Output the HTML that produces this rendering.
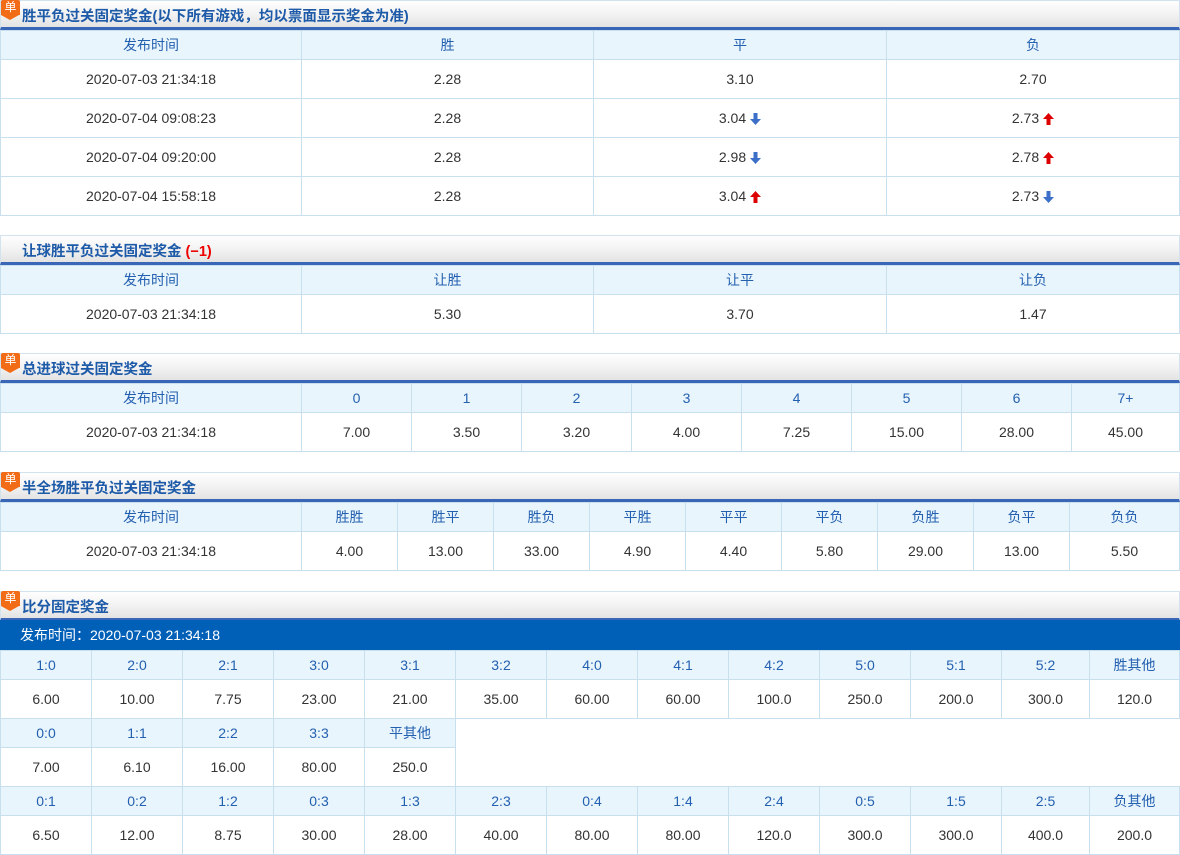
<!DOCTYPE html>
<html><head><meta charset="utf-8">
<style>
*{margin:0;padding:0;box-sizing:border-box}
body{width:1180px;height:854px;background:#fff;font-family:"Liberation Sans","Noto Sans CJK SC",sans-serif;position:relative;overflow:hidden}
.hd{position:absolute;left:0;width:1180px;height:30px;background:linear-gradient(#fefefe,#f3f3f3 50%,#e3e3e3);border:1px solid #d3e3ee;border-bottom:3px solid #3a66b8}
.hd .t{position:absolute;left:21px;top:4px;font-size:14.5px;color:#1d5aa8;font-weight:bold}
.dan{position:absolute;left:0;top:-1px;width:19px;height:20px}
.dan b{display:block;width:19px;height:15px;background:#f26b16;color:#fff;font-size:12px;font-weight:normal;line-height:15px;text-align:center;border-radius:2px 2px 0 0}
.dan i{display:block;width:0;height:0;border-left:9.5px solid transparent;border-right:9.5px solid transparent;border-top:5px solid #f26b16}
table{position:absolute;left:0;width:1180px;border-collapse:collapse;table-layout:fixed}
td{border:1px solid #c8dfee;text-align:center;font-size:14px;color:#333;height:39px;padding:0}
tr.h td{background:#e8f5fd;color:#2460b0;height:29px;font-size:14px}
.bar{position:absolute;left:0;top:620px;width:1180px;height:30px;background:#0060b8;color:#fff;font-size:14px;line-height:30px;padding-left:20px}
svg{vertical-align:-2px;margin-left:4px}
</style></head><body>

<div class="hd" style="top:0"><div class="dan"><b>单</b><i></i></div><span class="t">胜平负过关固定奖金(以下所有游戏，均以票面显示奖金为准)</span></div>
<table style="top:30px"><colgroup><col style="width:301px"><col style="width:292px"><col style="width:293px"><col></colgroup>
<tr class="h"><td>发布时间</td><td>胜</td><td>平</td><td>负</td></tr>
<tr><td>2020-07-03 21:34:18</td><td>2.28</td><td>3.10</td><td>2.70</td></tr>
<tr><td>2020-07-04 09:08:23</td><td>2.28</td><td>3.04<svg width="11" height="12"><path d="M3.5 0h4v6h3.5l-5.5 6-5.5-6h3.5z" fill="#3b6fc8"/></svg></td><td>2.73<svg width="11" height="12"><path d="M3.5 12h4v-6h3.5l-5.5-6-5.5 6h3.5z" fill="#d00"/></svg></td></tr>
<tr><td>2020-07-04 09:20:00</td><td>2.28</td><td>2.98<svg width="11" height="12"><path d="M3.5 0h4v6h3.5l-5.5 6-5.5-6h3.5z" fill="#3b6fc8"/></svg></td><td>2.78<svg width="11" height="12"><path d="M3.5 12h4v-6h3.5l-5.5-6-5.5 6h3.5z" fill="#d00"/></svg></td></tr>
<tr><td>2020-07-04 15:58:18</td><td>2.28</td><td>3.04<svg width="11" height="12"><path d="M3.5 12h4v-6h3.5l-5.5-6-5.5 6h3.5z" fill="#d00"/></svg></td><td>2.73<svg width="11" height="12"><path d="M3.5 0h4v6h3.5l-5.5 6-5.5-6h3.5z" fill="#3b6fc8"/></svg></td></tr>
</table>

<div class="hd" style="top:235px"><span class="t">让球胜平负过关固定奖金 <span style="color:#e00">(−1)</span></span></div>
<table style="top:265px"><colgroup><col style="width:301px"><col style="width:292px"><col style="width:293px"><col></colgroup>
<tr class="h"><td>发布时间</td><td>让胜</td><td>让平</td><td>让负</td></tr>
<tr><td>2020-07-03 21:34:18</td><td>5.30</td><td>3.70</td><td>1.47</td></tr>
</table>

<div class="hd" style="top:353px"><div class="dan"><b>单</b><i></i></div><span class="t">总进球过关固定奖金</span></div>
<table style="top:383px"><colgroup><col style="width:301px"><col style="width:110px"><col style="width:110px"><col style="width:110px"><col style="width:110px"><col style="width:110px"><col style="width:110px"><col style="width:110px"><col></colgroup>
<tr class="h"><td>发布时间</td><td>0</td><td>1</td><td>2</td><td>3</td><td>4</td><td>5</td><td>6</td><td>7+</td></tr>
<tr><td>2020-07-03 21:34:18</td><td>7.00</td><td>3.50</td><td>3.20</td><td>4.00</td><td>7.25</td><td>15.00</td><td>28.00</td><td>45.00</td></tr>
</table>

<div class="hd" style="top:472px"><div class="dan"><b>单</b><i></i></div><span class="t">半全场胜平负过关固定奖金</span></div>
<table style="top:502px"><colgroup><col style="width:301px"><col style="width:96px"><col style="width:96px"><col style="width:96px"><col style="width:96px"><col style="width:96px"><col style="width:96px"><col style="width:96px"><col style="width:96px"><col></colgroup>
<tr class="h"><td>发布时间</td><td>胜胜</td><td>胜平</td><td>胜负</td><td>平胜</td><td>平平</td><td>平负</td><td>负胜</td><td>负平</td><td>负负</td></tr>
<tr><td>2020-07-03 21:34:18</td><td>4.00</td><td>13.00</td><td>33.00</td><td>4.90</td><td>4.40</td><td>5.80</td><td>29.00</td><td>13.00</td><td>5.50</td></tr>
</table>

<div class="hd" style="top:591px"><div class="dan"><b>单</b><i></i></div><span class="t">比分固定奖金</span></div>
<div class="bar">发布时间：2020-07-03 21:34:18</div>
<table style="top:650px"><colgroup><col style="width:91px"><col style="width:91px"><col style="width:91px"><col style="width:91px"><col style="width:91px"><col style="width:91px"><col style="width:91px"><col style="width:91px"><col style="width:91px"><col style="width:91px"><col style="width:91px"><col style="width:88px"><col></colgroup>
<tr class="h"><td>1:0</td><td>2:0</td><td>2:1</td><td>3:0</td><td>3:1</td><td>3:2</td><td>4:0</td><td>4:1</td><td>4:2</td><td>5:0</td><td>5:1</td><td>5:2</td><td>胜其他</td></tr>
<tr><td>6.00</td><td>10.00</td><td>7.75</td><td>23.00</td><td>21.00</td><td>35.00</td><td>60.00</td><td>60.00</td><td>100.0</td><td>250.0</td><td>200.0</td><td>300.0</td><td>120.0</td></tr>
<tr class="h"><td>0:0</td><td>1:1</td><td>2:2</td><td>3:3</td><td>平其他</td><td colspan="8" style="background:#fff;border-bottom:none;border-right:none"></td></tr>
<tr><td>7.00</td><td>6.10</td><td>16.00</td><td>80.00</td><td>250.0</td><td colspan="8" style="border-top:none;border-right:none"></td></tr>
<tr class="h"><td>0:1</td><td>0:2</td><td>1:2</td><td>0:3</td><td>1:3</td><td>2:3</td><td>0:4</td><td>1:4</td><td>2:4</td><td>0:5</td><td>1:5</td><td>2:5</td><td>负其他</td></tr>
<tr><td>6.50</td><td>12.00</td><td>8.75</td><td>30.00</td><td>28.00</td><td>40.00</td><td>80.00</td><td>80.00</td><td>120.0</td><td>300.0</td><td>300.0</td><td>400.0</td><td>200.0</td></tr>
</table>
</body></html>
